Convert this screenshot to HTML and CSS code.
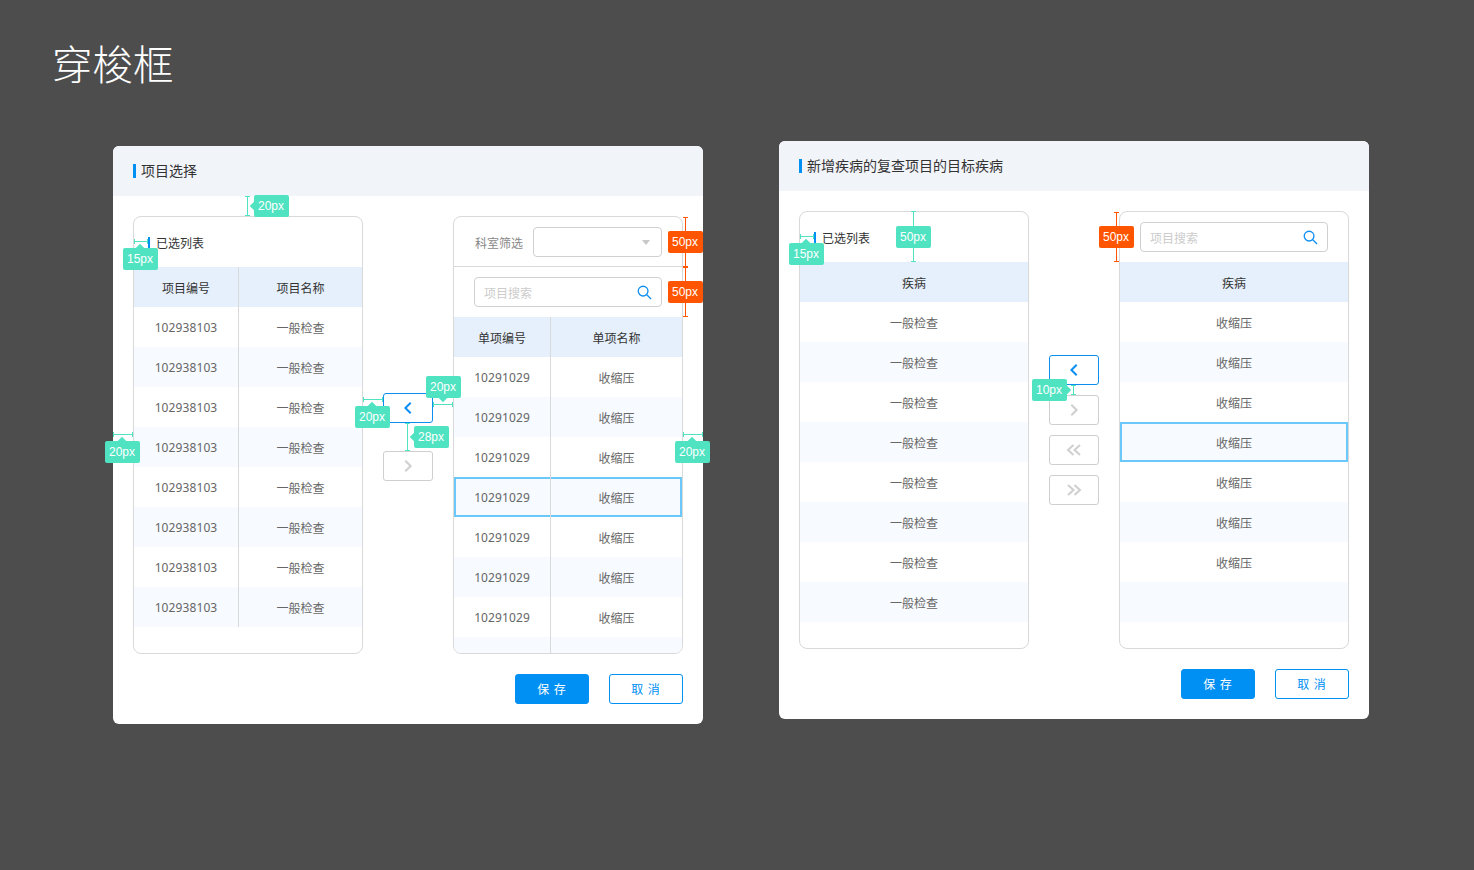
FILE: index.html
```html
<!DOCTYPE html>
<html lang="zh-CN">
<head>
<meta charset="utf-8">
<title>穿梭框</title>
<link rel="stylesheet" href="styles.css">
</head>
<body>
<h1 class="page-title">穿梭框</h1>
<main class="board">

<section class="card card-first">
  <header class="card-head"><h2 class="card-title">项目选择</h2></header>
  <div class="transfer">
    <div class="panel">
      <div class="panel-bar"><span class="list-title">已选列表</span></div>
      <div class="row row-head cols-left"><span>项目编号</span><span>项目名称</span></div>
      <div class="row cols-left"><span class="num">102938103</span><span>一般检查</span></div>
      <div class="row alt cols-left"><span class="num">102938103</span><span>一般检查</span></div>
      <div class="row cols-left"><span class="num">102938103</span><span>一般检查</span></div>
      <div class="row alt cols-left"><span class="num">102938103</span><span>一般检查</span></div>
      <div class="row cols-left"><span class="num">102938103</span><span>一般检查</span></div>
      <div class="row alt cols-left"><span class="num">102938103</span><span>一般检查</span></div>
      <div class="row cols-left"><span class="num">102938103</span><span>一般检查</span></div>
      <div class="row alt cols-left"><span class="num">102938103</span><span>一般检查</span></div>
    </div>
    <div class="actions actions-wide">
      <button class="move move-on"><svg class="chev" viewBox="0 0 10 14"><path d="M7.7 1.8 L2.4 7 L7.7 12.2"/></svg></button>
      <button class="move"><svg class="chev" viewBox="0 0 10 14"><path d="M2.3 1.8 L7.6 7 L2.3 12.2"/></svg></button>
    </div>
    <div class="panel">
      <div class="panel-bar panel-filter">
        <span class="filter-label">科室筛选</span>
        <div class="select"><i class="caret"></i></div>
      </div>
      <div class="panel-bar panel-search">
        <div class="search"><span class="placeholder">项目搜索</span><svg class="search-icon" viewBox="0 0 16 16"><circle cx="6.5" cy="6.5" r="5.2"/><path d="M10.4 10.4 L15 15"/></svg></div>
      </div>
      <div class="row row-head cols-right"><span>单项编号</span><span>单项名称</span></div>
      <div class="row cols-right"><span class="num">10291029</span><span>收缩压</span></div>
      <div class="row alt cols-right"><span class="num">10291029</span><span>收缩压</span></div>
      <div class="row cols-right"><span class="num">10291029</span><span>收缩压</span></div>
      <div class="row alt selected cols-right"><span class="num">10291029</span><span>收缩压</span></div>
      <div class="row cols-right"><span class="num">10291029</span><span>收缩压</span></div>
      <div class="row alt cols-right"><span class="num">10291029</span><span>收缩压</span></div>
      <div class="row cols-right"><span class="num">10291029</span><span>收缩压</span></div>
      <div class="row alt cols-right"><span></span><span></span></div>
    </div>
  </div>
  <footer class="card-foot"><button class="btn btn-primary">保 存</button><button class="btn btn-ghost">取 消</button></footer>

  <i class="dim dim-v d1"></i><b class="tag tag-left t1">20px</b>
  <i class="dim dim-h d2"></i><b class="tag tag-top t2">15px</b>
  <i class="dim dim-h d3"></i><b class="tag tag-top t3">20px</b>
  <i class="dim dim-h d4"></i><b class="tag tag-top t4">20px</b>
  <i class="dim dim-h d5"></i><b class="tag tag-bottom t5">20px</b>
  <i class="dim dim-v d6"></i><b class="tag tag-left t6">28px</b>
  <i class="dim dim-h d7"></i><b class="tag tag-top t7">20px</b>
  <i class="dim dim-v dim-warn d8"></i><b class="tag tag-warn t8">50px</b>
  <i class="dim dim-v dim-warn d9"></i><b class="tag tag-warn t9">50px</b>
</section>

<section class="card">
  <header class="card-head"><h2 class="card-title">新增疾病的复查项目的目标疾病</h2></header>
  <div class="transfer">
    <div class="panel">
      <div class="panel-bar"><span class="list-title">已选列表</span></div>
      <div class="row row-head cols-one"><span>疾病</span></div>
      <div class="row cols-one"><span>一般检查</span></div>
      <div class="row alt cols-one"><span>一般检查</span></div>
      <div class="row cols-one"><span>一般检查</span></div>
      <div class="row alt cols-one"><span>一般检查</span></div>
      <div class="row cols-one"><span>一般检查</span></div>
      <div class="row alt cols-one"><span>一般检查</span></div>
      <div class="row cols-one"><span>一般检查</span></div>
      <div class="row alt cols-one"><span>一般检查</span></div>
    </div>
    <div class="actions">
      <button class="move move-on"><svg class="chev" viewBox="0 0 10 14"><path d="M7.7 1.8 L2.4 7 L7.7 12.2"/></svg></button>
      <button class="move"><svg class="chev" viewBox="0 0 10 14"><path d="M2.3 1.8 L7.6 7 L2.3 12.2"/></svg></button>
      <button class="move"><svg class="chev chev-double" viewBox="0 0 16 14"><path d="M7.5 2 L2 7 L7.5 12M14 2 L8.5 7 L14 12"/></svg></button>
      <button class="move"><svg class="chev chev-double" viewBox="0 0 16 14"><path d="M2 2 L7.5 7 L2 12M8.5 2 L14 7 L8.5 12"/></svg></button>
    </div>
    <div class="panel">
      <div class="panel-bar panel-search">
        <div class="search"><span class="placeholder">项目搜索</span><svg class="search-icon" viewBox="0 0 16 16"><circle cx="6.5" cy="6.5" r="5.2"/><path d="M10.4 10.4 L15 15"/></svg></div>
      </div>
      <div class="row row-head cols-one"><span>疾病</span></div>
      <div class="row cols-one"><span>收缩压</span></div>
      <div class="row alt cols-one"><span>收缩压</span></div>
      <div class="row cols-one"><span>收缩压</span></div>
      <div class="row alt selected cols-one"><span>收缩压</span></div>
      <div class="row cols-one"><span>收缩压</span></div>
      <div class="row alt cols-one"><span>收缩压</span></div>
      <div class="row cols-one"><span>收缩压</span></div>
      <div class="row alt cols-one"><span></span></div>
    </div>
  </div>
  <footer class="card-foot"><button class="btn btn-primary">保 存</button><button class="btn btn-ghost">取 消</button></footer>

  <i class="dim dim-h d2"></i><b class="tag tag-top t2">15px</b>
  <i class="dim dim-v d10"></i><b class="tag t10">50px</b>
  <i class="dim dim-v d11"></i><b class="tag tag-right t11">10px</b>
  <i class="dim dim-v dim-warn d12"></i><b class="tag tag-warn t12">50px</b>
</section>

</main>
</body>
</html>
```
FILE: styles.css
```css
* { box-sizing: border-box; }
html, body { margin: 0; height: 100%; }
body {
  background: #4d4d4d;
  font-family: "Noto Sans", "Noto Sans CJK SC", sans-serif;
  font-size: 12px;
  color: #666;
  overflow: hidden;
}
.page-title {
  margin: 0;
  padding: 34px 0 0 52px;
  height: 141px;
  font-family: "Noto Sans CJK SC", sans-serif;
  font-size: 40.5px;
  line-height: 58px;
  font-weight: 300;
  color: #fff;
}
.board { display: flex; align-items: flex-start; gap: 76px; padding-left: 113px; }
.card { position: relative; width: 590px; height: 578px; background: #fff; border-radius: 6px; }
.card-first { margin-top: 5px; }
.card-head {
  display: flex; align-items: center;
  height: 50px; padding-left: 20px;
  background: #f1f4f9;
  border-radius: 6px 6px 0 0;
}
.card-title {
  margin: 0; padding: 0 0 2px 5px;
  border-left: 3px solid #008ff2;
  font-size: 14px; line-height: 12px; font-weight: 400; color: #333;
  font-family: "Noto Sans CJK SC", sans-serif;
}
.transfer { display: flex; gap: 20px; padding: 20px 20px 0; }
.panel {
  width: 230px; height: 438px; flex: none;
  background: #fff;
  border: 1px solid #d9d9d9;
  border-radius: 8px;
  overflow: hidden;
  display: flex; flex-direction: column;
}
.panel-bar { flex: none; display: flex; align-items: center; height: 50px; padding: 2px 0 0 14px; }
.list-title {
  height: 12px;
  padding-left: 6px;
  border-left: 2px solid #008ff2;
  line-height: 14px;
  color: #333;
}
.panel-filter { padding: 0 0 0 21px; border-bottom: 1px solid #d9d9d9; }
.panel-search { padding: 0 0 0 20px; }
.filter-label { width: 58px; flex: none; color: #888; padding-top: 2px; }
.select, .search {
  position: relative;
  height: 30px;
  border: 1px solid #d0d0d0;
  border-radius: 4px;
}
.select { width: 129px; }
.caret {
  position: absolute; right: 11px; top: 12px;
  border: 4px solid transparent; border-top: 5px solid #c8c8c8; border-bottom: 0;
}
.search { width: 188px; display: flex; align-items: center; padding-left: 9px; }
.placeholder { color: #ccc; padding-top: 2px; }
.search-icon {
  position: absolute; right: 9px; top: 7px;
  width: 15px; height: 15px;
  fill: none; stroke: #0f8ff0; stroke-width: 1.4;
}
.row { flex: none; display: grid; height: 40px; background: #fff; text-align: center; }
.row > span { display: block; height: 40px; line-height: 43px; }
.row > .num { line-height: 41px; letter-spacing: .1px; }
.row.alt { background: #f7faff; }
.row.row-head { background: #e6f0fc; color: #333; }
.row.selected { box-shadow: inset 0 0 0 2px #6ac8fb; }
.cols-left { grid-template-columns: 105px 1fr; }
.cols-right { grid-template-columns: 97px 1fr; }
.cols-one { grid-template-columns: 1fr; }
.cols-left > span:first-child, .cols-right > span:first-child { border-right: 1px solid #d9d9d9; }
.actions { width: 50px; flex: none; display: flex; flex-direction: column; justify-content: center; gap: 10px; }
.actions-wide { gap: 28px; padding-top: 4px; }
.move {
  display: flex; align-items: center; justify-content: center;
  width: 50px; height: 30px; padding: 0;
  background: #fff;
  border: 1px solid #cfcfcf;
  border-radius: 3px;
  color: #cfcfcf;
}
.move-on { border-color: #0c8ff0; color: #0c8ff0; }
.chev { width: 10px; height: 14px; fill: none; stroke: currentColor; stroke-width: 2; }
.chev-double { width: 16px; }
.card-foot { display: flex; justify-content: flex-end; gap: 20px; padding: 20px 20px 0; }
.btn {
  width: 74px; height: 30px; padding: 0;
  border: 1px solid #008ff2;
  border-radius: 3px;
  font: 12px/28px "Noto Sans CJK SC", sans-serif;
  letter-spacing: 1px;
}
.btn-primary { background: #008ff2; color: #fff; }
.btn-ghost { background: #fff; color: #008ff2; }

/* redline annotations laid over the mock-up */
.dim { position: absolute; display: block; color: #50e3c2; }
.dim-warn { color: #ff5500; }
.dim-h {
  height: 5px;
  border-left: 1px solid currentColor; border-right: 1px solid currentColor;
  background: linear-gradient(currentColor, currentColor) center / 100% 1px no-repeat;
}
.dim-v {
  width: 5px;
  border-top: 1px solid currentColor; border-bottom: 1px solid currentColor;
  background: linear-gradient(currentColor, currentColor) center / 1px 100% no-repeat;
}
.tag {
  position: absolute; display: block;
  width: 35px; height: 22px; padding-right: 1px;
  background: #50e3c2;
  border-radius: 2px;
  font: 400 12px/22px "Liberation Sans", sans-serif;
  color: #fff; text-align: center;
}
.tag-warn { background: #ff5500; }
.tag::after { content: ""; position: absolute; width: 6px; height: 6px; background: inherit; transform: rotate(45deg); }
.t10::after, .tag-warn::after { display: none; }
.tag-top::after { left: 14px; top: -3px; }
.tag-bottom::after { left: 14px; bottom: -3px; }
.tag-left::after { left: -3px; top: 8px; }
.tag-right::after { right: -3px; top: 8px; }

.d1 { left: 132px; top: 50px; height: 20px; }
.t1 { left: 141px; top: 49px; }
.d2 { left: 21px; top: 93px; width: 14px; }
.t2 { left: 10px; top: 102px; }
.d3 { left: 0; top: 286px; width: 20px; }
.t3 { left: -8px; top: 295px; }
.d4 { left: 250px; top: 251px; width: 20px; }
.t4 { left: 242px; top: 260px; }
.d5 { left: 320px; top: 256px; width: 20px; }
.t5 { left: 313px; top: 230px; }
.d6 { left: 292px; top: 277px; height: 28px; }
.t6 { left: 301px; top: 280px; }
.d7 { left: 570px; top: 286px; width: 20px; }
.t7 { left: 562px; top: 295px; }
.d8 { left: 570px; top: 71px; height: 50px; }
.t8 { left: 555px; top: 85px; }
.d9 { left: 570px; top: 121px; height: 50px; }
.t9 { left: 555px; top: 135px; }
.d10 { left: 132px; top: 70px; height: 51px; }
.t10 { left: 117px; top: 85px; }
.d11 { left: 292px; top: 244px; height: 10px; }
.t11 { left: 253px; top: 238px; }
.d12 { left: 335px; top: 71px; height: 50px; }
.t12 { left: 320px; top: 85px; }
```
